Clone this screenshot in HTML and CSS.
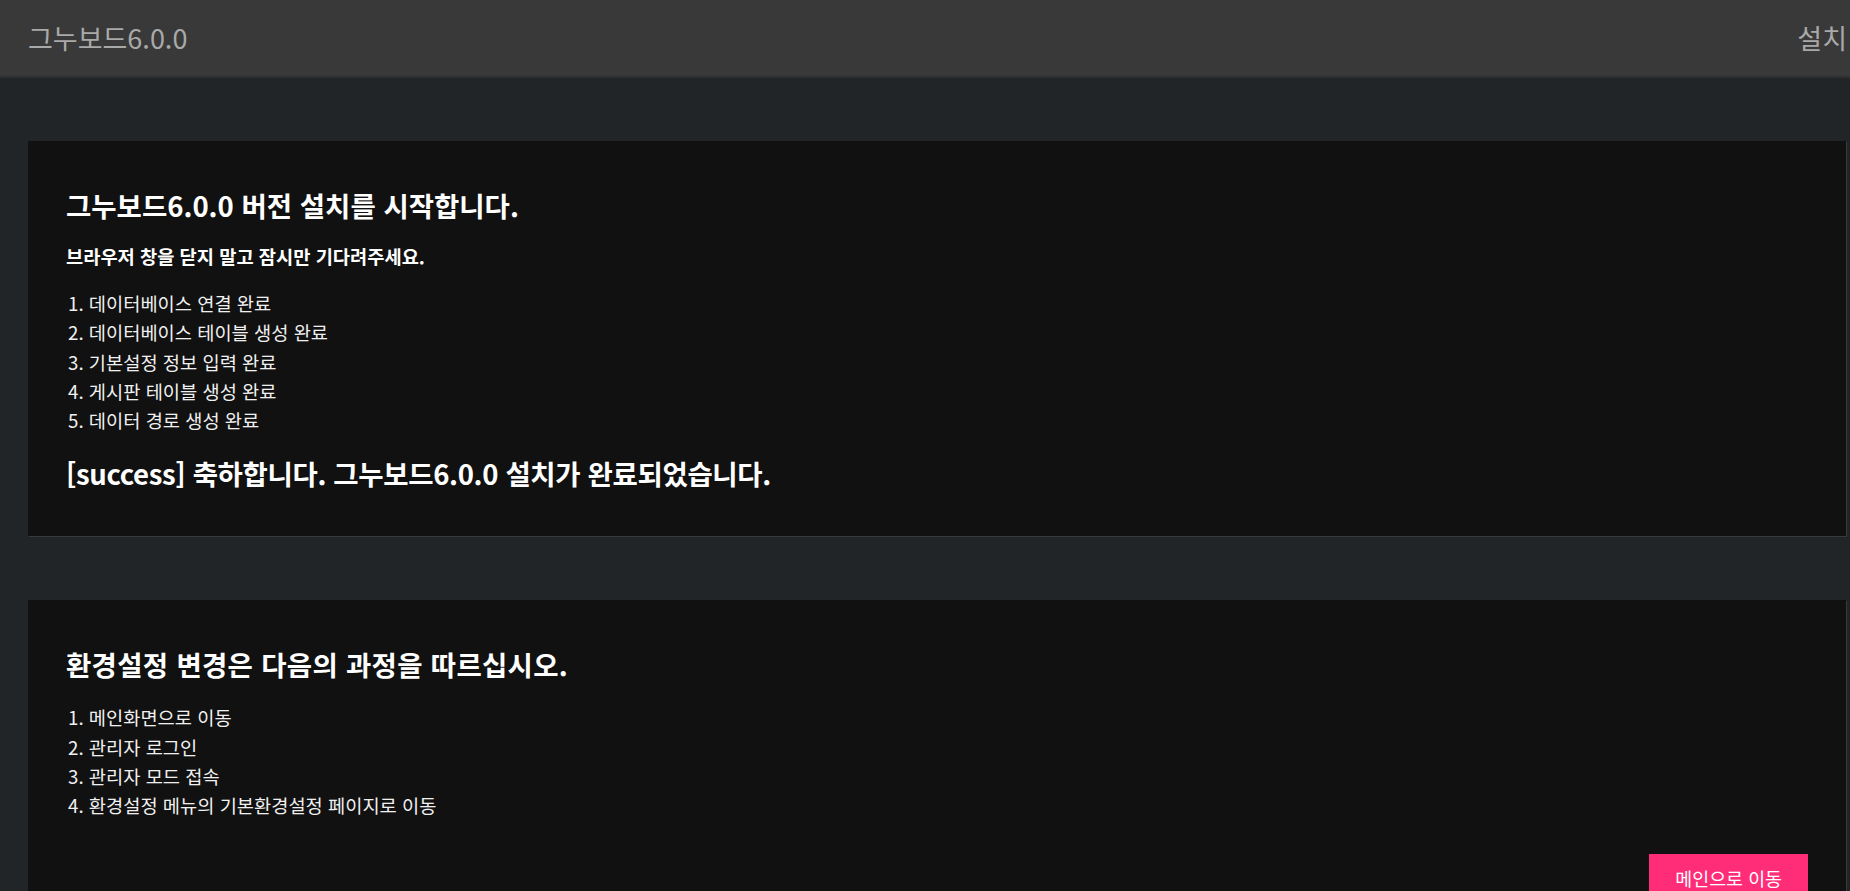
FILE: index.html
```html
<!DOCTYPE html>
<html lang="ko">
<head>
<meta charset="utf-8">
<title>그누보드6.0.0 설치</title>
<link rel="stylesheet" href="styles.css">
</head>
<body>
<header class="topbar">
  <div class="brand">그누보드6.0.0</div>
  <div class="nav">설치</div>
</header>
<main class="content">
  <section class="card">
    <h1 class="title">그누보드6.0.0 버전 설치를 시작합니다.</h1>
    <p class="sub">브라우저 창을 닫지 말고 잠시만 기다려주세요.</p>
    <ol class="steps">
      <li>데이터베이스 연결 완료</li>
      <li>데이터베이스 테이블 생성 완료</li>
      <li>기본설정 정보 입력 완료</li>
      <li>게시판 테이블 생성 완료</li>
      <li>데이터 경로 생성 완료</li>
    </ol>
    <h2 class="title success">[success] 축하합니다. 그누보드6.0.0 설치가 완료되었습니다.</h2>
  </section>
  <section class="card card-second">
    <h2 class="title title-wide">환경설정 변경은 다음의 과정을 따르십시오.</h2>
    <ol class="steps steps-second">
      <li>메인화면으로 이동</li>
      <li>관리자 로그인</li>
      <li>관리자 모드 접속</li>
      <li>환경설정 메뉴의 기본환경설정 페이지로 이동</li>
    </ol>
    <div class="actions">
      <a class="btn" href="#">메인으로 이동</a>
    </div>
  </section>
</main>
</body>
</html>
```

FILE: styles.css
```css
html, body {
  margin: 0;
  padding: 0;
}
body {
  background: #222528;
  font-family: "Noto Sans CJK KR", "Noto Sans", sans-serif;
  color: #fff;
  overflow: hidden;
}
.topbar {
  height: 76px;
  background: #393939;
  border-bottom: 2px solid #2f2f2f;
  display: flex;
  align-items: center;
  justify-content: space-between;
  padding: 0 0 0 28px;
}
.brand, .nav {
  font-size: 27px;
  color: #a9a9a9;
  line-height: 1;
  padding-bottom: 2px;
}
.nav {
  margin-right: 3px;
}
.content {
  padding: 63px 4px 0 28px;
}
.card {
  background: #111111;
  box-shadow: 1px 1px 0 #3a3a3a;
  padding: 49px 38px 47px 38px;
}
.card-second {
  margin-top: 64px;
  padding-bottom: 0;
}
.title {
  margin: 0;
  font-size: 27.5px;
  line-height: 31px;
  font-weight: 700;
  color: #fff;
}
.title-wide {
  letter-spacing: 0.3px;
}
.sub {
  margin: 22px 0 0;
  font-size: 18.7px;
  line-height: 26px;
  font-weight: 700;
}
.steps {
  margin: 19px 0 0;
  padding: 0 0 0 2px;
  list-style: decimal inside;
  font-size: 18.7px;
  line-height: 29.25px;
  color: #f0f0f0;
}
.steps li::marker {
  content: counter(list-item) ". ";
}
.success {
  margin-top: 24px;
  letter-spacing: -0.35px;
}
.steps-second {
  margin-top: 22px;
}
.actions {
  display: flex;
  justify-content: flex-end;
  margin-top: 35px;
}
.btn {
  display: block;
  background: #ff2d78;
  color: #fff;
  text-decoration: none;
  font-size: 18.4px;
  line-height: 26px;
  padding: 11px 26px 13px;
}
```
